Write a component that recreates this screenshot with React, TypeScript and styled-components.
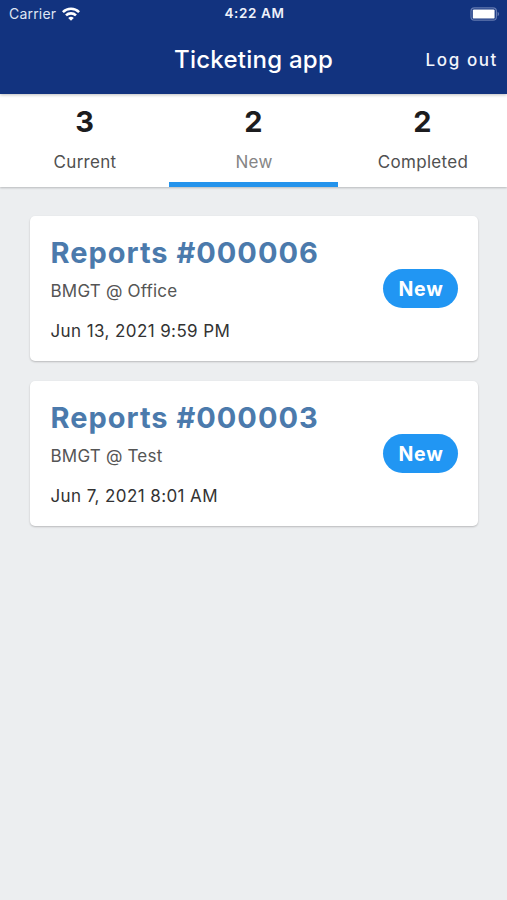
import React from "react";
import styled, { createGlobalStyle } from "styled-components";

const Global = createGlobalStyle`
  *{box-sizing:border-box}
  body{margin:0;background:#eceef0;font-family:Inter,"Liberation Sans",sans-serif}
`;
const Screen = styled.div`width:507px;height:900px;background:#eceef0;overflow:hidden;`;
const Header = styled.header`height:94px;background:#12337f;color:#fff;box-shadow:0 1px 3px rgba(0,0,0,.25);position:relative;z-index:1;`;
const Status = styled.div`height:27px;display:grid;grid-template-columns:1fr auto 1fr;align-items:center;padding:0 7px 0 9px;font-size:14px;line-height:26px;`;
const Carrier = styled.div`display:flex;align-items:center;gap:6px;letter-spacing:.2px;color:#dfe5f3;`;
const Clock = styled.div`font-weight:600;font-size:13.5px;letter-spacing:.6px;line-height:27px;color:#eef1fa;`;
const Battery = styled.svg`justify-self:end;`;
const NavBar = styled.div`height:66px;display:grid;grid-template-columns:1fr auto 1fr;align-items:center;padding-right:9px;padding-left:9px;`;
const Title = styled.h1`grid-column:2;margin:0;font-size:24px;font-weight:500;letter-spacing:.25px;line-height:30px;`;
const LogOut = styled.button`justify-self:end;background:none;border:0;padding:0;color:#f2f5fc;font:550 17px Inter,sans-serif;letter-spacing:1.6px;`;
const Tabs = styled.nav`height:93px;display:grid;grid-template-columns:repeat(3,1fr);background:#fff;box-shadow:0 1px 2px rgba(0,0,0,.22);`;
const Tab = styled.div<{ $active?: boolean }>`display:flex;flex-direction:column;align-items:center;padding-top:10px;border-bottom:5px solid ${p => p.$active ? "#2493ec" : "transparent"};`;
const Count = styled.div`font-size:29px;line-height:36px;font-weight:650;color:#1c1c1e;`;
const TabLabel = styled.div<{ $active?: boolean }>`margin-top:10.5px;padding-left:1px;font-size:17px;line-height:22px;letter-spacing:.3px;color:${p => p.$active ? "#858585" : "#505050"};`;
const List = styled.main`padding:29px 29px 0 30px;display:flex;flex-direction:column;gap:20px;`;
const Card = styled.article`height:145px;display:flex;align-items:center;justify-content:space-between;padding:0 20px 0 20.5px;background:#fff;border-radius:5px;box-shadow:0 1px 2px rgba(0,0,0,.22);`;
const Info = styled.div`height:145px;padding-top:19px;`;
const Name = styled.h2`margin:0;font-size:29px;line-height:36px;font-weight:700;letter-spacing:1px;color:#4b7aac;`;
const Place = styled.div`margin-top:9px;font-size:17px;line-height:22px;letter-spacing:.2px;color:#555;`;
const DateText = styled.div`margin-top:18px;font-size:17px;line-height:22px;letter-spacing:.4px;color:#333;`;
const Badge = styled.div`width:75px;height:39px;padding-left:1px;border-radius:20px;background:#2196f3;color:#fff;font-size:19.5px;line-height:40px;font-weight:700;letter-spacing:.8px;text-align:center;`;

const tabs = [
  { count: 3, label: "Current" },
  { count: 2, label: "New", active: true },
  { count: 2, label: "Completed" },
];
const reports = [
  { id: "000006", place: "BMGT @ Office", date: "Jun 13, 2021 9:59 PM" },
  { id: "000003", place: "BMGT @ Test", date: "Jun 7, 2021 8:01 AM" },
];

export default function App() {
  return (
    <Screen>
      <Global />
      <Header>
        <Status>
          <Carrier>
            Carrier
            <svg width="18" height="14" viewBox="0 0 18 14" fill="none" stroke="#fff" strokeWidth="2.6">
              <path d="M.9 5.1a11.6 11.6 0 0 1 16.2 0M4 8.4a7.2 7.2 0 0 1 10 0" />
              <path d="M9 13.8 6.2 11a4 4 0 0 1 5.6 0z" fill="#fff" stroke="none" />
            </svg>
          </Carrier>
          <Clock>4:22 AM</Clock>
          <Battery width="30" height="14" viewBox="0 0 30 14">
            <rect x="1" y=".8" width="25.4" height="12.4" rx="3.5" fill="none" stroke="#6379b0" strokeWidth="1.2" />
            <rect x="2.8" y="2.4" width="21.8" height="9.2" rx="1.2" fill="#fff" />
            <path d="M27.6 4.8c2 .8 2 3.6 0 4.4z" fill="#6379b0" />
          </Battery>
        </Status>
        <NavBar>
          <Title>Ticketing app</Title>
          <LogOut>Log out</LogOut>
        </NavBar>
      </Header>
      <Tabs>
        {tabs.map(t => (
          <Tab key={t.label} $active={t.active}>
            <Count>{t.count}</Count>
            <TabLabel $active={t.active}>{t.label}</TabLabel>
          </Tab>
        ))}
      </Tabs>
      <List>
        {reports.map(r => (
          <Card key={r.id}>
            <Info>
              <Name>Reports #{r.id}</Name>
              <Place>{r.place}</Place>
              <DateText>{r.date}</DateText>
            </Info>
            <Badge>New</Badge>
          </Card>
        ))}
      </List>
    </Screen>
  );
}
